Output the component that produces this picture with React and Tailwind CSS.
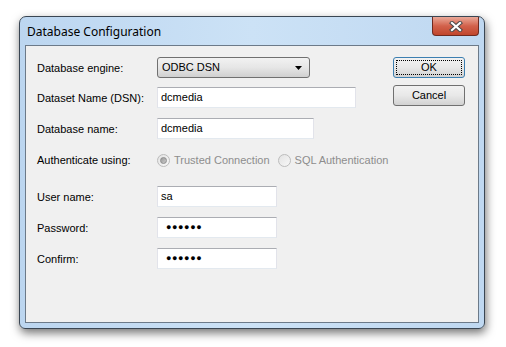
import React from "react";

const F = { fontFamily: '"Liberation Sans", Arial, sans-serif' };

function TextBox({ w, children, dots }) {
  return (
    <div
      className={`${w} h-[21px] shrink-0 bg-white border border-[#e2e3ea] border-t-[#abadb3] border-b-[#e3e9ef] flex items-center pl-[3px] text-[11px] text-black`}
    >
      {dots ? (
        <span className="text-[9px] tracking-[0.6px] pl-[5px] leading-none">●●●●●●</span>
      ) : (
        children
      )}
    </div>
  );
}

function Row({ label, mt, children, h = "h-[21px]" }) {
  return (
    <div className={`flex items-center whitespace-nowrap ${h} ${mt}`}>
      <div className="w-[120px] shrink-0 text-[11px] text-black pt-[1px]">{label}</div>
      {children}
    </div>
  );
}

function Radio({ checked, label }) {
  return (
    <div className="flex items-center shrink-0">
      <div className="w-[13px] h-[13px] rounded-full border border-[#bcbcbc] bg-gradient-to-br from-[#e3e3e3] to-[#f8f8f8] flex items-center justify-center">
        {checked && (
          <div className="w-[7px] h-[7px] rounded-full bg-gradient-to-br from-[#9a9a9a] to-[#cacaca] border border-[#8c8c8c]" />
        )}
      </div>
      <span className="ml-[4px] text-[11px] text-[#8d8d8d]">{label}</span>
    </div>
  );
}

function Button({ children, focused }) {
  return (
    <div
      className={`w-[72px] h-[21px] rounded-[3px] border ${
        focused ? "border-[#3c7fb1]" : "border-[#707070]"
      } bg-gradient-to-b from-[#f2f2f2] via-[#e8e8e8] to-[#d2d2d2] relative flex items-center justify-center text-[11px] text-black`}
    >
      {focused && (
        <div className="absolute inset-[2px] border border-dotted border-black rounded-[1px]" />
      )}
      {children}
    </div>
  );
}

export default function App() {
  return (
    <div className="w-[506px] h-[347px] bg-white pl-[19px] pt-[16px]" style={F}>
      <div className="w-[466px] h-[313px] rounded-t-[7px] rounded-b-[6px] border border-[#3a4653] bg-gradient-to-r from-[#bcd6f0] via-[#cce2f6] to-[#bfd8f1] shadow-[1px_4px_10px_rgba(0,0,0,0.55)] flex flex-col">
        <div className="h-[28px] flex justify-between pl-[7px] pr-[5px]">
          <div
            className="text-[12px] text-black self-center pt-[1px]"
            style={{ fontFamily: '"Noto Sans", "Open Sans", sans-serif' }}
          >
            Database Configuration
          </div>
          <div className="w-[47px] h-[19px] rounded-b-[4px] border border-t-0 border-[#6f2a20] bg-gradient-to-b from-[#e9a898] via-[#d2614b] to-[#c0452c] flex items-center justify-center">
            <svg width="14" height="11" viewBox="0 0 14 11">
              <path d="M3 2 L11 9 M11 2 L3 9" stroke="#4a4a4a" strokeWidth="4.2" strokeLinecap="square" />
              <path d="M3 2 L11 9 M11 2 L3 9" stroke="#ffffff" strokeWidth="2.2" strokeLinecap="square" />
            </svg>
          </div>
        </div>
        <div className="mx-[5px] mb-[5px] flex-1 border border-[#6c7a89] bg-[#f0f0f0] flex">
          <div className="pl-[11px] pt-[11px] flex flex-col">
            <Row label="Database engine:">
              <div className="w-[153px] h-[21px] shrink-0 rounded-[3px] border border-[#707070] bg-gradient-to-b from-[#f2f2f2] via-[#e6e6e6] to-[#d0d0d0] flex items-center justify-between pl-[4px] pr-[7px] text-[11px] text-black">
                <span>ODBC DSN</span>
                <svg width="7" height="4" viewBox="0 0 7 4">
                  <path d="M0 0 H7 L3.5 4 Z" fill="#000" />
                </svg>
              </div>
            </Row>
            <Row label="Dataset Name (DSN):" mt="mt-[9px]">
              <TextBox w="w-[199px]">dcmedia</TextBox>
            </Row>
            <Row label="Database name:" mt="mt-[10px]">
              <TextBox w="w-[157px]">dcmedia</TextBox>
            </Row>
            <Row label="Authenticate using:" mt="mt-[11px]" h="h-[20px]">
              <div className="flex items-center gap-[8px] shrink-0">
                <Radio checked label="Trusted Connection" />
                <Radio label="SQL Authentication" />
              </div>
            </Row>
            <Row label="User name:" mt="mt-[16px]">
              <TextBox w="w-[120px]">sa</TextBox>
            </Row>
            <Row label="Password:" mt="mt-[10px]">
              <TextBox w="w-[120px]" dots />
            </Row>
            <Row label="Confirm:" mt="mt-[10px]">
              <TextBox w="w-[120px]" dots />
            </Row>
          </div>
          <div className="ml-auto pr-[13px] pt-[11px] flex flex-col gap-[7px]">
            <Button focused>OK</Button>
            <Button>Cancel</Button>
          </div>
        </div>
      </div>
    </div>
  );
}
